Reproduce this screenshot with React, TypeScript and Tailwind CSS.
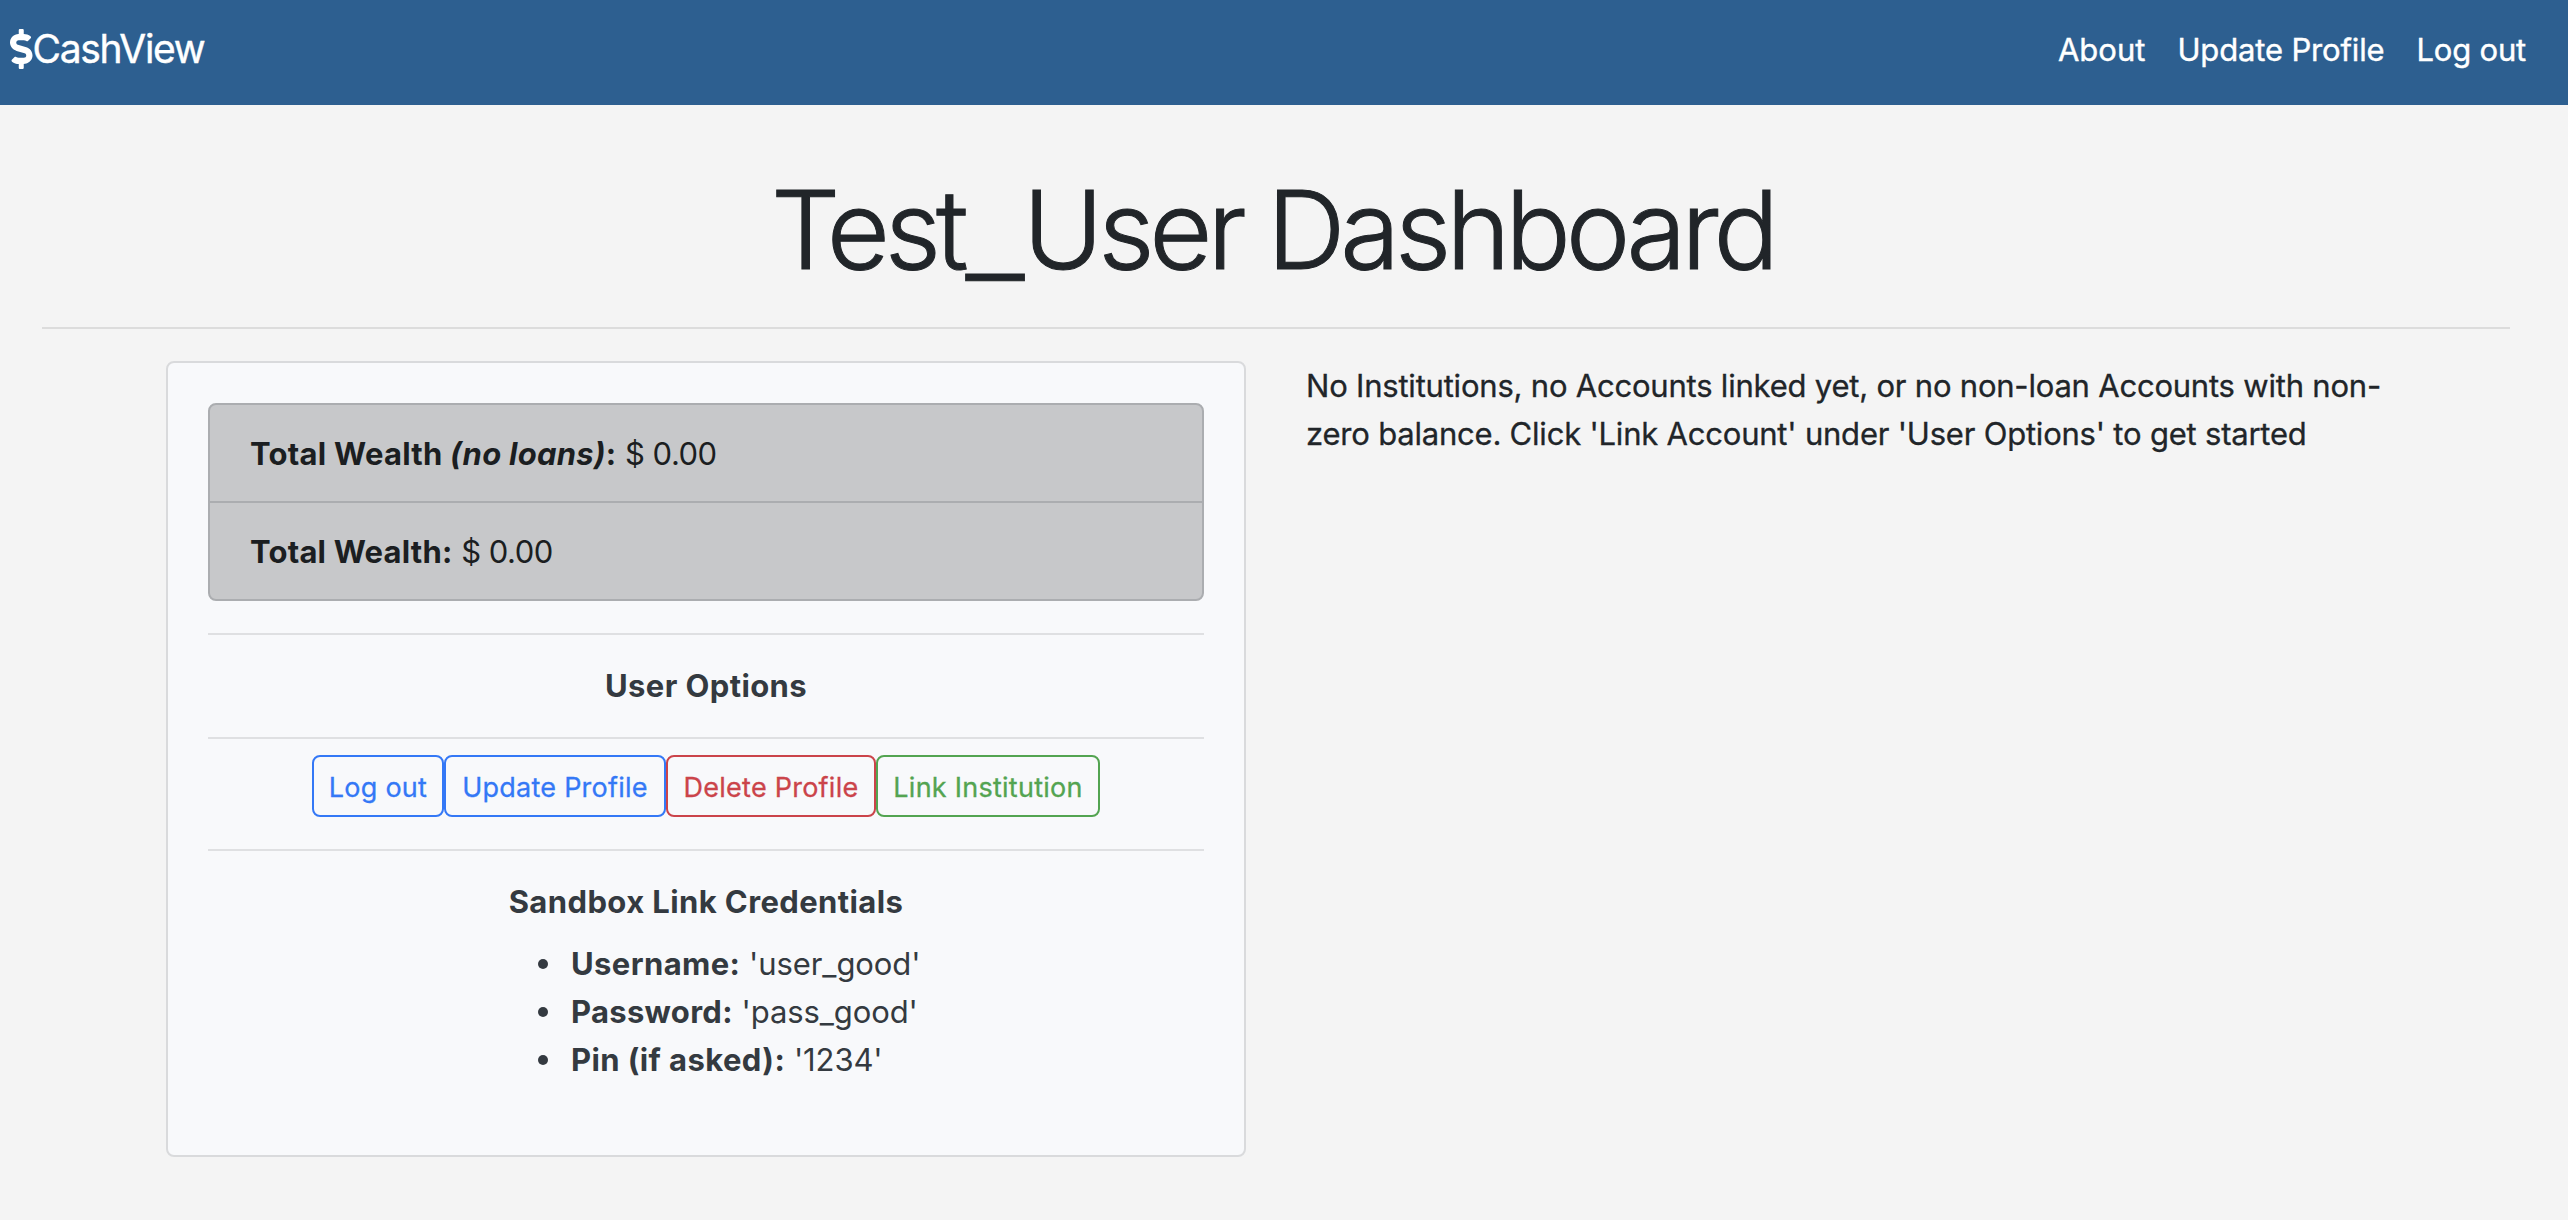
import type { ReactNode } from "react";
import { FaDollarSign } from "react-icons/fa";

const navLinks = [
  { label: "About", className: "tracking-[0px]" },
  { label: "Update Profile", className: "tracking-[-0.15px]" },
  { label: "Log out", className: "tracking-[-0.2px]" },
];

const actions = [
  { label: "Log out", className: "w-[132px] border-[#3478f6] text-[#3478f6]" },
  { label: "Update Profile", className: "w-[222px] border-[#3478f6] text-[#3478f6]" },
  { label: "Delete Profile", className: "w-[210px] border-[#cb444a] text-[#cb444a]" },
  { label: "Link Institution", className: "w-[224px] border-[#53a451] text-[#53a451]" },
];

const credentials = [
  { label: "Username:", value: "'user_good'", className: "tracking-[0.4px]" },
  { label: "Password:", value: "'pass_good'", className: "tracking-[0.3px]" },
  { label: "Pin (if asked):", value: "'1234'", className: "tracking-[0.4px]" },
];

function Divider({ className = "" }: { className?: string }) {
  return <hr className={`h-[2px] border-0 bg-[#dfe0e2] ${className}`} />;
}

function SectionTitle({ children, className }: { children: ReactNode; className: string }) {
  return <h2 className={`mt-[27px] text-center font-bold ${className}`}>{children}</h2>;
}

export default function App() {
  return (
    <div className="min-h-screen bg-[#f4f4f4] font-['Inter',sans-serif] text-[31px] leading-[48px] text-[#212529]">
      <nav className="flex h-[105px] items-start justify-between bg-[#2d5f90] pt-[19px] pr-[42px] pl-[10px] text-white [-webkit-text-stroke:0.4px]">
        <a className="flex items-center text-[39px] leading-[60px] tracking-[-1.3px]">
          <FaDollarSign className="h-10 w-[22.5px]" />
          CashView
        </a>
        <ul className="flex gap-8 pt-[7px]">
          {navLinks.map((link) => (
            <li key={link.label} className={link.className}>{link.label}</li>
          ))}
        </ul>
      </nav>

      <header className="mx-[42px] w-[2468px] pt-[57px]">
        <h1 className="pr-[7px] text-center text-[109px] leading-[134px] font-light tracking-[-5.1px] [-webkit-text-stroke:1px]">
          Test<span className="mr-[9px] ml-[7px] inline-block translate-y-[5px] scale-x-[1.2]">_</span>User Dashboard
        </h1>
        <hr className="mt-[31px] h-[2px] border-0 bg-[#dcdcdc]" />
      </header>

      <main className="mt-8 ml-[166px] flex items-start gap-[60px]">
        <section className="h-[796px] w-[1080px] rounded-lg border-2 border-[#d9dadc] bg-[#f8f9fb] p-10 text-[#343a40]">
          <ul className="overflow-hidden rounded-lg border-2 border-[#abadb0] bg-[#c7c8ca] text-[#1b1e21]">
            <li className="h-[98px] border-b-2 border-[#abadb0] px-10 pt-[25px]">
              <b className="tracking-[0.25px]">Total Wealth <i>(no loans)</i>:</b> <span className="tracking-[-0.5px]">$ 0.00</span>
            </li>
            <li className="h-24 px-10 pt-[25px]">
              <b className="tracking-[0.2px]">Total Wealth:</b> <span className="tracking-[-0.5px]">$ 0.00</span>
            </li>
          </ul>
          <Divider className="mt-8" />
          <SectionTitle className="tracking-[0.4px]">User Options</SectionTitle>
          <Divider className="mt-[27px]" />
          <div className="mt-4 flex justify-center">
            {actions.map((action) => (
              <button
                key={action.label}
                className={`flex h-[62px] items-center justify-center rounded-lg border-2 pt-[3px] text-[27px] leading-[42px] tracking-[0.25px] [-webkit-text-stroke:0.3px] ${action.className}`}
              >
                {action.label}
              </button>
            ))}
          </div>
          <Divider className="mt-8" />
          <SectionTitle className="tracking-[0.4px]">Sandbox Link Credentials</SectionTitle>
          <ul className="mt-[14px] ml-[330px]">
            {credentials.map((item) => (
              <li key={item.label} className="flex items-center">
                <span className="mr-[23px] size-[10px] rounded-full bg-[#343a40]" />
                <span>
                  <b className={item.className}>{item.label}</b> <span className="tracking-[-0.1px]">{item.value}</span>
                </span>
              </li>
            ))}
          </ul>
        </section>
        <p className="w-[1120px] pt-px tracking-[-0.21px] [-webkit-text-stroke:0.3px]">
          No Institutions, no Accounts linked yet, or no non-loan Accounts with non-
          <br />
          zero balance. Click 'Link Account' under 'User Options' to get started
        </p>
      </main>
    </div>
  );
}
